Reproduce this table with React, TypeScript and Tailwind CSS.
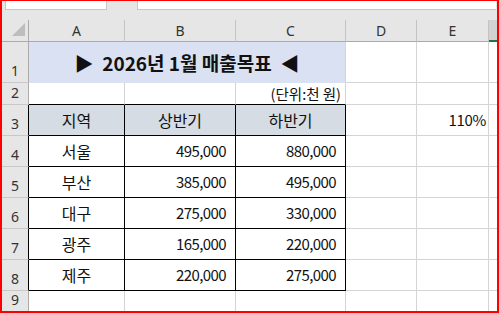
import React from "react";

const W = [27, 96, 111, 110, 71, 72];

function RowHdr({ n, h, black = false }: { n: number; h: string; black?: boolean }) {
  return (
    <div
      className={`w-[27px] shrink-0 ${h} bg-[#e6e6e6] border-b border-b-[#c8c8c8] border-r ${
        black ? "border-r-black" : "border-r-[#ababab]"
      } flex items-end justify-center pb-[3px] text-[14px] leading-[16px] text-[#333] font-['Noto_Sans',sans-serif]`}
    >
      {n}
    </div>
  );
}

const data = [
  ["서울", "495,000", "880,000"],
  ["부산", "385,000", "495,000"],
  ["대구", "275,000", "330,000"],
  ["광주", "165,000", "220,000"],
  ["제주", "220,000", "275,000"],
];

export default function App() {
  const grid = "border-r border-b border-[#d4d4d4]";
  const blk = "border-r border-b border-black";
  return (
    <div className="w-[499px] h-[313px] overflow-hidden flex flex-col bg-[#e6e6e6] border-t border-l-2 border-r-2 border-b-2 border-[#ff0000] font-['Noto_Sans_CJK_KR',sans-serif] text-[#111]">
      {/* formula bar */}
      <div className="h-[19px] shrink-0 flex items-start">
        <div className="ml-[3px] w-[102px] h-[9px] bg-white border-l border-r border-b border-[#c6c6c6]" />
        <div className="ml-[30px] flex-1 mr-[1px] h-[9px] bg-white border-l border-b border-[#c6c6c6]" />
      </div>
      {/* column header */}
      <div className="h-[22px] shrink-0 flex text-[14px] text-[#333] font-['Noto_Sans',sans-serif]">
        <div className="w-[27px] shrink-0 h-full relative border-r border-b border-[#ababab]">
          <svg className="absolute left-[10px] top-[3px]" width="14" height="14" viewBox="0 0 14 14">
            <polygon points="13,0 13,13 0,13" fill="#bdbdbd" />
          </svg>
        </div>
        {["A", "B", "C", "D", "E"].map((c, i) => (
          <div
            key={c}
            style={{ width: W[i + 1] }}
            className="shrink-0 h-full flex items-center justify-center border-r border-r-[#c4c4c4] border-b border-b-[#ababab]"
          >
            {c}
          </div>
        ))}
        <div className="flex-1 h-full bg-[#d2d2d2] border-b-2 border-[#217346]" />
      </div>
      {/* row 1 */}
      <div className="h-[41px] shrink-0 flex bg-white">
        <RowHdr n={1} h="h-[41px]" />
        <div className="w-[317px] shrink-0 h-full bg-[#d9e1f2] border-r border-r-[#d4d4d4] border-b border-b-[#d9e1f2] flex items-center justify-center pt-[3px] text-[19px] font-bold whitespace-pre">
          {"▶  2026년 1월 매출목표  ◀"}
        </div>
        <div className={`w-[71px] shrink-0 h-full ${grid}`} />
        <div className={`w-[72px] shrink-0 h-full ${grid}`} />
        <div className="flex-1 h-full border-b border-[#d4d4d4]" />
      </div>
      {/* row 2 */}
      <div className="h-[22px] shrink-0 flex bg-white">
        <RowHdr n={2} h="h-[22px]" />
        <div className="w-[96px] shrink-0 h-full border-r border-r-[#d4d4d4] border-b border-b-black" />
        <div className="w-[111px] shrink-0 h-full border-r border-r-[#d4d4d4] border-b border-b-black" />
        <div className="w-[110px] shrink-0 h-full border-r border-r-[#d4d4d4] border-b border-b-black flex items-center justify-end pr-[4px] text-[14.5px]">
          (단위:천 원)
        </div>
        <div className={`w-[71px] shrink-0 h-full ${grid}`} />
        <div className={`w-[72px] shrink-0 h-full ${grid}`} />
        <div className="flex-1 h-full border-b border-[#d4d4d4]" />
      </div>
      {/* row 3 */}
      <div className="h-[31px] shrink-0 flex bg-white text-[16px]">
        <RowHdr n={3} h="h-[31px]" black />
        {["지역", "상반기", "하반기"].map((t, i) => (
          <div
            key={t}
            style={{ width: W[i + 1] }}
            className={`shrink-0 h-full bg-[#d6dce4] ${blk} flex items-center justify-center`}
          >
            {t}
          </div>
        ))}
        <div className={`w-[71px] shrink-0 h-full ${grid}`} />
        <div className={`w-[72px] shrink-0 h-full ${grid} flex items-center justify-end pr-[2px] text-[15px] tracking-[-0.3px]`}>
          110%
        </div>
        <div className="flex-1 h-full border-b border-[#d4d4d4]" />
      </div>
      {data.map((r, k) => (
        <div key={k} className="h-[31px] shrink-0 flex bg-white text-[15px]">
          <RowHdr n={k + 4} h="h-[31px]" black />
          <div className={`w-[96px] shrink-0 h-full ${blk} flex items-center justify-center text-[16px]`}>{r[0]}</div>
          <div className={`w-[111px] shrink-0 h-full ${blk} flex items-center justify-end pr-[9px] tracking-[-0.6px]`}>
            {r[1]}
          </div>
          <div className={`w-[110px] shrink-0 h-full ${blk} flex items-center justify-end pr-[9px] tracking-[-0.6px]`}>
            {r[2]}
          </div>
          <div className={`w-[71px] shrink-0 h-full ${grid}`} />
          <div className={`w-[72px] shrink-0 h-full ${grid}`} />
          <div className="flex-1 h-full border-b border-[#d4d4d4]" />
        </div>
      ))}
      {/* row 9 */}
      <div className="flex-1 min-h-0 flex bg-white">
        <div className="w-[27px] shrink-0 h-full bg-[#e6e6e6] border-r border-[#ababab] flex items-end justify-center pb-[3px] text-[14px] leading-[16px] text-[#333] font-['Noto_Sans',sans-serif]">
          9
        </div>
        <div className="w-[96px] shrink-0 h-full border-r border-[#d4d4d4]" />
        <div className="w-[111px] shrink-0 h-full border-r border-[#d4d4d4]" />
        <div className="w-[110px] shrink-0 h-full border-r border-[#d4d4d4]" />
        <div className="w-[71px] shrink-0 h-full border-r border-[#d4d4d4]" />
        <div className="w-[72px] shrink-0 h-full border-r border-[#d4d4d4]" />
        <div className="flex-1 h-full" />
      </div>
    </div>
  );
}
